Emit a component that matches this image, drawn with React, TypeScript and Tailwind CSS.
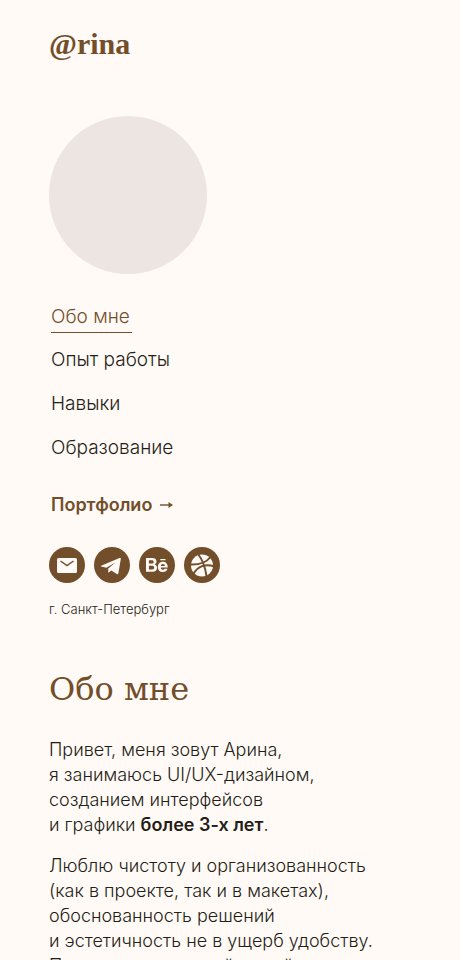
import type { ReactNode } from "react";

const navItems = ["Обо мне", "Опыт работы", "Навыки", "Образование"];

function Social({ label, children }: { label: string; children: ReactNode }) {
  return (
    <a href="#" aria-label={label} className="flex size-9 items-center justify-center rounded-full bg-[#724e2b] text-[#fffaf5]">
      {children}
    </a>
  );
}

export default function App() {
  return (
    <div className="min-h-screen bg-[#fffaf5] px-[49px] pt-7 font-['Inter','Noto_Sans',sans-serif] font-light text-[#251d17]">
      <header>
        <a href="#" className="block font-['Liberation_Serif',serif] text-[30px] leading-8 font-bold text-[#724e2b]">@rina</a>
        <div role="img" aria-label="Фото" className="mt-14 size-[158px] rounded-full bg-[#ece5e2]" />
        <nav className="mt-[29px] flex flex-col items-start gap-4 pl-[2px] text-[19px] leading-7">
          {navItems.map((item, i) => (
            <a key={item} href="#" className={i === 0 ? "-mb-[3px] border-b border-[#724e2b] pr-[2px] pb-[1px] text-[#724e2b]" : ""}>
              {item}
            </a>
          ))}
        </nav>
        <a href="#" className="mt-[29px] ml-[2px] flex items-center gap-2 text-lg leading-7 font-semibold text-[#724e2b]">
          Портфолио
          <svg width="13" height="8" viewBox="0 0 13 8" aria-hidden="true">
            <path d="M0 4H11" stroke="currentColor" strokeWidth="1.4" />
            <path d="M8.5 1 13 4 8.5 7Z" fill="currentColor" />
          </svg>
        </a>
        <div className="mt-7 flex gap-[9px]">
          <Social label="Почта">
            <svg className="size-9" viewBox="0 0 36 36" aria-hidden="true">
              <rect x="8" y="11" width="20" height="15" rx="1.5" fill="currentColor" />
              <path d="m11.500 14 6.500 4.500 6.500-4.500" fill="none" stroke="#724e2b" strokeWidth="1.5" />
            </svg>
          </Social>
          <Social label="Telegram">
            <svg className="size-9" viewBox="0 0 36 36" aria-hidden="true">
              <path d="M7.2 18.700 25.500 11.100c.9-.4 1.500.1 1.300 1l-2.400 14.200c-.2.900-.9 1.300-1.600.8l-5.500-3.700-3 2.300-.1-4.100 7.300-6.200-9.200 5.400-4.900-1.200c-.7-.2-.7-.7-.2-.9Z" fill="currentColor" />
            </svg>
          </Social>
          <Social label="Behance">
            <svg className="size-9" viewBox="0 0 36 36" aria-hidden="true">
              <path fillRule="evenodd" fill="currentColor" d="M7 11h6.300c2.700 0 4.200 1.300 4.200 3.500 0 1.400-.7 2.300-1.900 2.900 1.600.5 2.500 1.700 2.500 3.400 0 2.500-1.800 4-4.600 4H7Zm2.900 2.300v3.200h2.900c1.200 0 1.900-.6 1.900-1.600s-.7-1.600-1.900-1.600Zm0 5.400v3.700h3.300c1.300 0 2-.7 2-1.900 0-1.100-.8-1.800-2-1.800Z" />
              <path fillRule="evenodd" fill="currentColor" d="M28.800 20.600h-7c.1 1.500.9 2.200 2.100 2.200.9 0 1.500-.4 1.800-1h2.800c-.6 2.200-2.300 3.300-4.700 3.300-3 0-4.900-2-4.900-5.100s2-5.200 4.900-5.200 5 2 5 5.800Zm-7-1.700h4.100c-.1-1.200-.8-1.900-2-1.900s-1.900.7-2.100 1.900ZM21.300 12h5.200v1.300h-5.200Z" />
            </svg>
          </Social>
          <Social label="Dribbble">
            <svg className="size-9" viewBox="0 0 36 36" aria-hidden="true">
              <circle cx="18" cy="18.500" r="11" fill="currentColor" />
              <path d="M14 7c4 5 7 12 8.500 22M6 17.500c8 .4 16-1.500 20.500-7.500M9.500 27c4-8 12-10.500 21-7.500" fill="none" stroke="#724e2b" strokeWidth="2" />
            </svg>
          </Social>
        </div>
        <p className="mt-4 text-[13px] leading-5">г. Санкт-Петербург</p>
      </header>
      <main className="mt-[50px]">
        <h1 className="font-['DejaVu_Serif',serif] text-[32px] leading-10 text-[#724e2b]">Обо мне</h1>
        <p className="mt-7 text-lg leading-[25px] whitespace-nowrap">
          Привет, меня зовут Арина,<br />
          я занимаюсь UI/UX-дизайном,<br />
          созданием интерфейсов<br />
          и графики <strong className="font-semibold">более 3-х лет</strong>.
        </p>
        <p className="mt-4 text-lg leading-[25px] whitespace-nowrap">
          Люблю чистоту и организованность<br />
          (как в проекте, так и в макетах),<br />
          обоснованность решений<br />
          и эстетичность не в ущерб удобству.<br />
          Потому веду каждый новый проект
        </p>
      </main>
    </div>
  );
}
